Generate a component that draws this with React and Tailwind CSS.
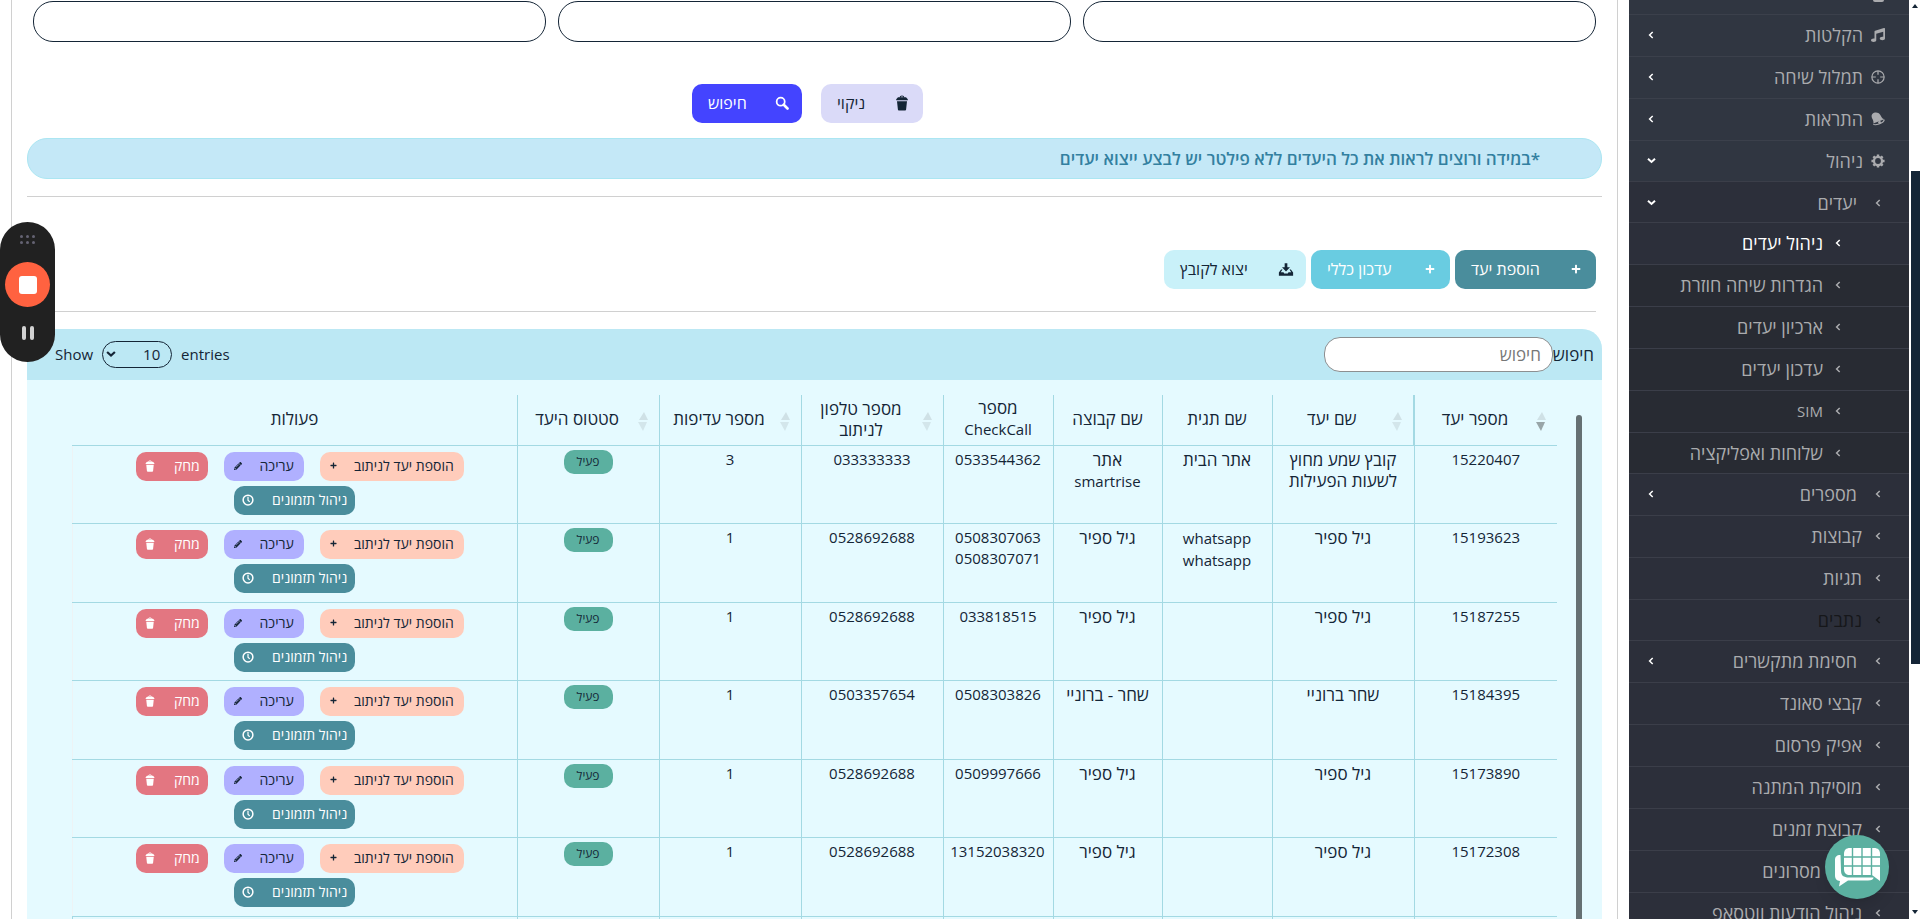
import React, { useState } from 'react';
import { FaMusic, FaPlus, FaPencilAlt } from 'react-icons/fa';

const TrashIcon = ({ className }) => (
  <svg viewBox="0 0 16 16" className={className} fill="currentColor">
    <path d="M5.600 2.600C5.800 1.200 6.600.5 8 .5s2.200.7 2.400 2.100L9.400 2.800C9.200 2 8.800 1.600 8 1.600s-1.200.4-1.400 1.200z" />
    <path d="M4 2.300h8l1.800 2v.9H2.200v-.9zM3 6.200h10l-.9 8.300c-.1.8-.6 1-1.100 1H5c-.5 0-1-.2-1.100-1z" />
  </svg>
);

const SearchIcon = ({ className }) => (
  <svg viewBox="0 0 16 16" className={className} fill="none" stroke="currentColor">
    <circle cx="6.500" cy="6.500" r="4.600" strokeWidth="2" />
    <path d="M10 10l4.300 4.300" strokeWidth="3" strokeLinecap="round" />
  </svg>
);

const DownloadIcon = ({ className }) => (
  <svg viewBox="0 0 18 16" className={className} fill="currentColor">
    <path d="M7.500 1h3v4.500h3L9 10.300 4.500 5.500h3z" />
    <path d="M3.500 8L1 11.500V15h16v-3.500L14.500 8h-1.600l2 3h-3.100l-.8 1.500H7l-.8-1.500H3.100l2-3z" />
  </svg>
);

const ClockIcon = ({ className }) => (
  <svg viewBox="0 0 16 16" className={className} fill="none" stroke="currentColor" strokeWidth="2">
    <circle cx="8" cy="8" r="6.500" />
    <path d="M8 3.800V8.300l2.300 2.200" strokeWidth="1.600" />
  </svg>
);

const TargetIcon = ({ className }) => (
  <svg viewBox="0 0 16 16" className={className} fill="none" stroke="currentColor" strokeWidth="1.400">
    <circle cx="8" cy="8" r="7" />
    <path d="M8 1v4.500M8 10.500V15M1 8h4.500M10.500 8H15" />
  </svg>
);

const BellIcon = ({ className }) => (
  <svg viewBox="0 0 16 16" className={className} fill="currentColor">
    <path d="M1.500 2.200C4-.2 8.500 0 10.500 3c1.300 2 1.500 4 4.700 5.400L2.600 13.200C3.400 10 1.700 8.600 1 6.500.5 4.800.5 3.300 1.500 2.200z" />
    <path d="M2.800 13.600C4 15.800 14.500 13.200 15.200 8.800" fill="none" stroke="currentColor" strokeWidth="1.300" />
    <circle cx="9.800" cy="12" r="1.600" />
  </svg>
);

const GearIcon = ({ className }) => (
  <svg viewBox="0 0 16 16" className={className} fill="none" stroke="currentColor">
    <circle cx="8" cy="8" r="4.600" strokeWidth="2.600" />
    <path d="M8 .5v2.500M8 13v2.500M.5 8H3M13 8h2.500M2.700 2.700l1.800 1.800M11.500 11.500l1.800 1.800M2.700 13.300l1.800-1.800M11.500 4.500l1.800-1.800" strokeWidth="2.800" />
  </svg>
);

const ChatLogo = ({ className }) => (
  <svg viewBox="0 0 46 40" className={className}>
    <path d="M6.500 8C2.500 8 1 10 1 13v15c0 4 1.500 5.500 5 6l-1 5.500 9-6h20c3.500 0 5.500-1 5.500-3H15c-5.500 0-8-2-8-7z" fill="#fff" />
    <path d="M16 1h24c4 0 6 2 6 6v27l-8-6H16c-4 0-6-2-6-6V7c0-4 2-6 6-6z" fill="#fff" />
    <path d="M18.500 1v27M28 1v27M37.500 1v27M10 10h36M10 19h36" stroke="#5bb0a0" strokeWidth="1.400" />
  </svg>
);

const Caret = ({ className }) => (
  <svg viewBox="0 0 6 8" className={className} fill="none" stroke="currentColor" strokeWidth="1.500">
    <path d="M4.700 1L1.600 4l3.100 3" />
  </svg>
);

const CaretDown = ({ className }) => (
  <svg viewBox="0 0 9 9" className={className} fill="none" stroke="currentColor" strokeWidth="2">
    <path d="M1 2.700l3.500 3.200L8 2.700" />
  </svg>
);

const Mixed = ({ text }) => text.split(' ').map((word, i) => (
  <React.Fragment key={i}>
    {i > 0 && ' '}
    {/[A-Za-z]/.test(word) ? <span className="text-[15px]">{word}</span> : word}
  </React.Fragment>
));

const mainItems = [
  { icon: FaMusic, label: 'הקלטות', open: false },
  { icon: TargetIcon, label: 'תמלול שיחה', open: false },
  { icon: BellIcon, label: 'התראות', open: false },
  { icon: GearIcon, label: 'ניהול', open: true },
];

const targetItems = [
  { label: 'ניהול יעדים', active: true },
  { label: 'הגדרות שיחה חוזרת' },
  { label: 'ארכיון יעדים' },
  { label: 'עדכון יעדים' },
  { label: 'SIM' },
  { label: 'שלוחות ואפליקציה' },
];

const manageItems = [
  { label: 'מספרים', more: true },
  { label: 'קבוצות' },
  { label: 'תגיות' },
  { label: 'נתבים', disabled: true },
  { label: 'חסימת מתקשרים', more: true },
  { label: 'קבצי סאונד' },
  { label: 'אפיק פרסום' },
  { label: 'מוסיקת המתנה' },
  { label: 'קבוצת זמנים' },
  { label: 'מסרונים', indent: true },
  { label: 'ניהול הודעות ווטסאפ' },
];

const columns = [
  { label: 'מספר יעד', width: 'w-[143px]', sort: 'desc' },
  { label: 'שם יעד', width: 'w-[142px]', sort: 'none' },
  { label: 'שם תגית', width: 'w-[110px]' },
  { label: 'שם קבוצה', width: 'w-[109px]' },
  { label: 'מספר CheckCall', width: 'w-[110px]' },
  { label: 'מספר טלפון לניתוב', width: 'w-[142px]', sort: 'none' },
  { label: 'מספר עדיפות', width: 'w-[142px]', sort: 'none' },
  { label: 'סטטוס היעד', width: 'w-[142px]', sort: 'none' },
  { label: 'פעולות', width: '' },
];

const rows = [
  { id: '15220407', name: 'קובץ שמע מחוץ לשעות הפעילות', tag: 'אתר הבית', group: 'אתר smartrise', check: '0533544362', phone: '033333333', priority: 3 },
  { id: '15193623', name: 'גיל ספיר', tag: 'whatsapp whatsapp', group: 'גיל ספיר', check: '0508307063 0508307071', phone: '0528692688', priority: 1 },
  { id: '15187255', name: 'גיל ספיר', tag: '', group: 'גיל ספיר', check: '033818515', phone: '0528692688', priority: 1 },
  { id: '15184395', name: 'שחר ברוניי', tag: '', group: 'שחר - ברוניי', check: '0508303826', phone: '0503357654', priority: 1 },
  { id: '15173890', name: 'גיל ספיר', tag: '', group: 'גיל ספיר', check: '0509997666', phone: '0528692688', priority: 1 },
  { id: '15172308', name: 'גיל ספיר', tag: '', group: 'גיל ספיר', check: '13152038320', phone: '0528692688', priority: 1 },
];

const SortArrows = ({ sort }) => (
  <svg viewBox="0 0 10 19" className="absolute right-[11px] top-[17px] w-[10px] h-[19px]">
    <path d="M6 0l4 8H1z" fill="#cfe1e6" />
    <path d="M0 10h9l-4 9z" fill={sort === 'desc' ? '#98a5a8' : '#d3e6eb'} />
  </svg>
);

const Sidebar = () => (
  <aside className="w-[280px] shrink-0 bg-[#303641] text-[#aaabae] text-lg leading-6 overflow-hidden">
    <div className="h-[14px] pr-[25px] overflow-hidden">
      <div className="w-[11px] h-[2px] rounded-b-sm bg-[#aaabae]"></div>
    </div>
    <nav>
      {mainItems.map((item) => (
        <a key={item.label} href="#" className="h-[42px] border-t border-[#3b404b] flex items-center pr-[24px] pl-[18px] pb-[2px]">
          <item.icon className="w-[14px] h-[14px]" />
          <span className="flex-1 mr-2">{item.label}</span>
          {item.open
            ? <CaretDown className="w-[9px] h-[9px] text-white" />
            : <Caret className="w-[6px] h-2 ml-px text-white" />}
        </a>
      ))}

      <div className="-mt-px bg-[#2c2f3a]">
        <a href="#" className="h-[42px] border-t border-[#3b3e49] flex items-center pr-[28px] pl-[18px]">
          <Caret className="w-[6px] h-2" />
          <span className="flex-1 mr-[18px]">יעדים</span>
          <CaretDown className="w-[9px] h-[9px] text-white" />
        </a>
        <div className="-mt-px -mb-px bg-[#282b33]">
          {targetItems.map((item) => (
            <a key={item.label} href="#" className={`h-[42px] border-t border-[#3b3e49] flex items-center pr-[68px] pb-px ${item.active ? 'bg-[#2c2f3a] text-white' : ''}`}>
              <Caret className="w-[6px] h-2" />
              <span className={`mr-[12px] ${item.label === 'SIM' ? 'text-[15px]' : ''}`}>{item.label}</span>
            </a>
          ))}
        </div>
        {manageItems.map((item) => (
          <a key={item.label} href="#" className={`h-[42px] border-t border-[#3b3e49] flex items-center pr-[28px] pl-[18px] pb-px ${item.disabled ? 'text-[#16171a] -mb-px' : ''}`}>
            <Caret className="w-[6px] h-2" />
            <span className={`flex-1 ${item.indent ? 'mr-[54px]' : item.more ? 'mr-[18px]' : 'mr-[13px]'}`}>{item.label}</span>
            {item.more && <Caret className="w-[6px] h-2 ml-px text-white" />}
          </a>
        ))}
      </div>
    </nav>
  </aside>
);

const RowActions = () => (
  <div className="flex flex-col items-center gap-[5px] pt-[3px] text-sm">
    <div className="flex gap-4 pl-[10px]">
      <button className="w-36 h-[29px] px-[10px] pb-px rounded-[10px] bg-[#ffccbb] flex items-center justify-between">הוספת יעד לניתוב<FaPlus className="w-[7px] h-[7px]" /></button>
      <button className="w-20 h-[29px] px-[10px] pb-px rounded-[10px] bg-[#b0b0ff] flex items-center justify-between">עריכה<FaPencilAlt className="w-2 h-2" /></button>
      <button className="w-[72px] h-[29px] px-2 pb-px rounded-[10px] bg-[#e37681] text-white flex items-center justify-between">מחק<TrashIcon className="w-3 h-3" /></button>
    </div>
    <button className="w-[121px] h-[29px] px-2 pb-px rounded-[10px] bg-[#4a8d9c] text-white flex items-center justify-between">ניהול תזמונים<ClockIcon className="w-3 h-3" /></button>
  </div>
);

const TargetsPage = () => {
  const [search, setSearch] = useState('');

  return (
    <div dir="rtl" className="h-screen overflow-hidden flex bg-white text-[#142536] font-['Open_Sans','Noto_Sans',sans-serif]">
      {/* Page scrollbar */}
      <div className="w-[11px] shrink-0 flex flex-col items-center pt-1">
        <div className="border-x-[3px] border-x-transparent border-b-[4px] border-b-[#142536]"></div>
        <div className="self-start w-[9px] h-[493px] mt-[163px] bg-[#142536]"></div>
        <div className="mt-auto mb-[5px] border-x-[3px] border-x-transparent border-t-[4px] border-t-[#142536]"></div>
      </div>

      <Sidebar />

      <main className="flex-1 min-w-0 mx-[11px] border-x border-[#d0d0d0] px-[15px]">
        {/* Filters */}
        <div className="grid grid-cols-3 gap-3 px-[6px] pt-px">
          <input aria-label="שם" className="h-[41px] px-4 border border-[#142536] rounded-[20px]" />
          <input aria-label="קבוצה" className="h-[41px] px-4 border border-[#142536] rounded-[20px]" />
          <input aria-label="תגית" className="h-[41px] px-4 border border-[#142536] rounded-[20px]" />
        </div>

        <div className="flex justify-center gap-[19px] mt-[42px] pr-[14px] text-base">
          <button className="w-[102px] h-[39px] pr-[13px] pl-4 pb-px rounded-[10px] bg-[#dadaf8] flex items-center justify-between"><TrashIcon className="w-4 h-4" />ניקוי</button>
          <button className="w-[110px] h-[39px] pr-[13px] pl-4 pb-px rounded-[10px] bg-[#4444ff] text-white flex items-center justify-between"><SearchIcon className="w-[14px] h-[14px]" />חיפוש</button>
        </div>

        <div className="mt-[15px] h-[41px] pr-[61px] rounded-[20px] border border-[#abe6f2] bg-[#c4e8f7] text-[#3380a0] text-[17px] font-semibold flex items-center">
          *במידה ורוצים לראות את כל היעדים ללא פילטר יש לבצע ייצוא יעדים
        </div>
        <hr className="mt-[17px] border-[#d0d0d0]" />

        <div className="flex gap-[5px] mt-[53px] pr-[6px] text-base">
          <button className="w-[141px] h-[39px] pr-[15px] pl-4 pb-px rounded-[10px] bg-[#4a8d9c] text-white flex items-center justify-between"><FaPlus className="w-[10px] h-[10px]" />הוספת יעד</button>
          <button className="w-[139px] h-[39px] pr-[15px] pl-4 pb-px rounded-[10px] bg-[#69cce1] text-white flex items-center justify-between"><FaPlus className="w-[10px] h-[10px]" />עדכון כללי</button>
          <button className="w-[142px] h-[39px] pr-[12px] pl-4 pb-px rounded-[10px] bg-[#c9f1f9] flex items-center justify-between"><DownloadIcon className="w-4 h-[15px]" />יצוא לקובץ</button>
        </div>
        <hr className="mt-[22px] mx-[6px] border-[#d0d0d0]" />

        {/* Targets table */}
        <section className="mt-[17px] rounded-t-[20px] bg-[#e5faff]">
          <div className="h-[51px] rounded-t-[20px] bg-[#bce8f4] flex items-center justify-between pr-2 pl-7">
            <div className="flex items-center">
              <label htmlFor="table-search" className="text-[17px]">חיפוש</label>
              <input id="table-search" value={search} onChange={(e) => setSearch(e.target.value)} placeholder="חיפוש" className="w-[229px] h-[35px] px-[11px] rounded-[16px] border border-[#8c8f91] bg-white text-[17px] placeholder:text-[#777]" />
            </div>
            <label dir="ltr" className="flex items-center gap-[9px] text-[15px]">
              Show
              <span className="relative">
                <select defaultValue="10" className="appearance-none block w-[70px] h-[27px] pl-10 rounded-[14px] border border-[#142536]">
                  <option>10</option>
                  <option>25</option>
                  <option>50</option>
                </select>
                <CaretDown className="absolute left-1 top-2 w-[10px] h-[10px]" />
              </span>
              entries
            </label>
          </div>

          <div className="flex pt-[15px] pl-[45px]">
            <div className="w-[45px] shrink-0 pr-5 pt-5">
              <div className="w-[6px] h-full rounded-t bg-[#657073]"></div>
            </div>
            <table className="flex-1 w-full table-fixed border-collapse text-[17px] leading-[21px] text-center">
              <thead>
                <tr className="h-[50px]">
                  {columns.map((col, i) => (
                    <th key={col.label} className={`relative font-normal pb-[2px] border-b border-[#a3d9e3] ${col.width} ${i === 0 ? 'border-l-2' : i < 8 ? 'border-l' : ''} ${col.sort ? 'pr-[30px] pl-2' : 'px-2'}`}>
                      <Mixed text={col.label} />
                      {col.sort && <SortArrows sort={col.sort} />}
                    </th>
                  ))}
                </tr>
              </thead>
              <tbody>
                {rows.map((row) => (
                  <tr key={row.id} className="h-[79px] odd:h-[78px] align-top [&>td]:border-b [&>td]:border-l [&>td]:border-[#a3d9e3] [&>td]:pt-[3px] [&>td]:px-2">
                    <td className="text-[15px]">{row.id}</td>
                    <td><Mixed text={row.name} /></td>
                    <td><Mixed text={row.tag} /></td>
                    <td><Mixed text={row.group} /></td>
                    <td className="text-[15px]">{row.check}</td>
                    <td className="text-[15px]">{row.phone}</td>
                    <td className="text-[15px]">{row.priority}</td>
                    <td>
                      <span className="inline-flex items-center justify-center w-[49px] h-6 rounded-[10px] bg-[#5bb0a0] text-xs">פעיל</span>
                    </td>
                    <td className="border-l-[#edf3f5]!"><RowActions /></td>
                  </tr>
                ))}
                <tr className="h-10 [&>td]:border-l [&>td]:border-[#a3d9e3]">
                  {columns.map((col) => (
                    <td key={col.label}></td>
                  ))}
                </tr>
              </tbody>
            </table>
          </div>
        </section>
      </main>

      {/* Screen recorder */}
      <div className="fixed left-0 top-[222px] w-[55px] h-[140px] rounded-[28px] bg-[#212121] flex flex-col items-center">
        <div className="grid grid-cols-3 gap-[3px] mt-[13px]">
          {[1, 2, 3, 4, 5, 6].map((n) => (
            <span key={n} className="w-[3px] h-[3px] rounded-full bg-[#656373]"></span>
          ))}
        </div>
        <button aria-label="Stop" className="w-[45px] h-[45px] mt-[18px] rounded-full bg-[#ff6240] flex items-center justify-center">
          <span className="w-[18px] h-[18px] rounded-[3px] bg-white"></span>
        </button>
        <button aria-label="Pause" className="flex gap-1 mt-[19px]">
          <span className="w-1 h-[14px] rounded-full bg-[#d2d2d2]"></span>
          <span className="w-1 h-[14px] rounded-full bg-[#d2d2d2]"></span>
        </button>
      </div>

      {/* Chat */}
      <button aria-label="Chat" className="fixed right-[31px] bottom-5 w-16 h-16 rounded-full bg-[#5bb0a0] shadow-lg flex items-center justify-center">
        <ChatLogo className="w-[46px] h-10" />
      </button>
    </div>
  );
};

export default TargetsPage;
